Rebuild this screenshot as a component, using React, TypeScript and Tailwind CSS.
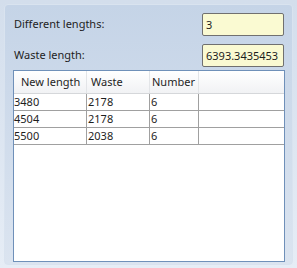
const rows = [
  { len: '3480', waste: '2178', num: '6' },
  { len: '4504', waste: '2178', num: '6' },
  { len: '5500', waste: '2038', num: '6' },
];

const font = { fontFamily: '"Noto Sans", "Open Sans", sans-serif' };

export default function App() {
  return (
    <div
      className="w-[297px] h-[268px] bg-gradient-to-b from-[#d3deec] to-[#e6edf6] pt-[4px] px-[4px] pb-[3px] text-[11px] text-[#1e1e1e]"
      style={font}
    >
      <div className="h-full rounded-[4px] border border-[#d9e3ef] bg-gradient-to-b from-[#c5d4e7] to-[#dbe4f0] pl-[8px] pr-[7px] pt-[8px] flex flex-col">
        <Field label="Different lengths:" value="3" />
        <div className="h-[8px]" />
        <Field label="Waste length:" value="6393.3435453" />
        <div className="h-[3px]" />
        <div className="w-[272px] h-[192px] border border-[#6f90b9] bg-white flex flex-col">
          <div className="flex h-[23px] bg-gradient-to-b from-white to-[#f1f2f4] border-b border-[#d5d7da]">
            <HeaderCell w="w-[73px]" pad="pl-[7px]">New length</HeaderCell>
            <HeaderCell w="w-[63px]" pad="pl-[4px]">Waste</HeaderCell>
            <HeaderCell w="w-[49px]" pad="pl-[2px]">Number</HeaderCell>
            <div className="flex-1" />
          </div>
          {rows.map((r, i) => (
            <div key={i} className="flex h-[17px] border-b border-[#a0a0a0] leading-[16px]">
              <div className="w-[73px] border-r border-[#a0a0a0]">{r.len}</div>
              <div className="w-[63px] border-r border-[#a0a0a0] pl-[1px]">{r.waste}</div>
              <div className="w-[49px] border-r border-[#a0a0a0] pl-[1px]">{r.num}</div>
              <div className="flex-1" />
            </div>
          ))}
        </div>
      </div>
    </div>
  );
}

function Field({ label, value }: { label: string; value: string }) {
  return (
    <div className="flex items-center justify-between h-[23px]">
      <span className="pl-[1px]">{label}</span>
      <div className="w-[82px] h-[23px] mr-[1px] rounded-[2px] border border-[#707070] bg-[#fafad2] pl-[3px] leading-[21px] overflow-hidden whitespace-nowrap">
        {value}
      </div>
    </div>
  );
}

function HeaderCell({ w, pad, children }: { w: string; pad: string; children: React.ReactNode }) {
  return (
    <div className={`${w} ${pad} border-r border-[#e3e5e8] leading-[22px] whitespace-nowrap overflow-hidden`}>
      {children}
    </div>
  );
}
